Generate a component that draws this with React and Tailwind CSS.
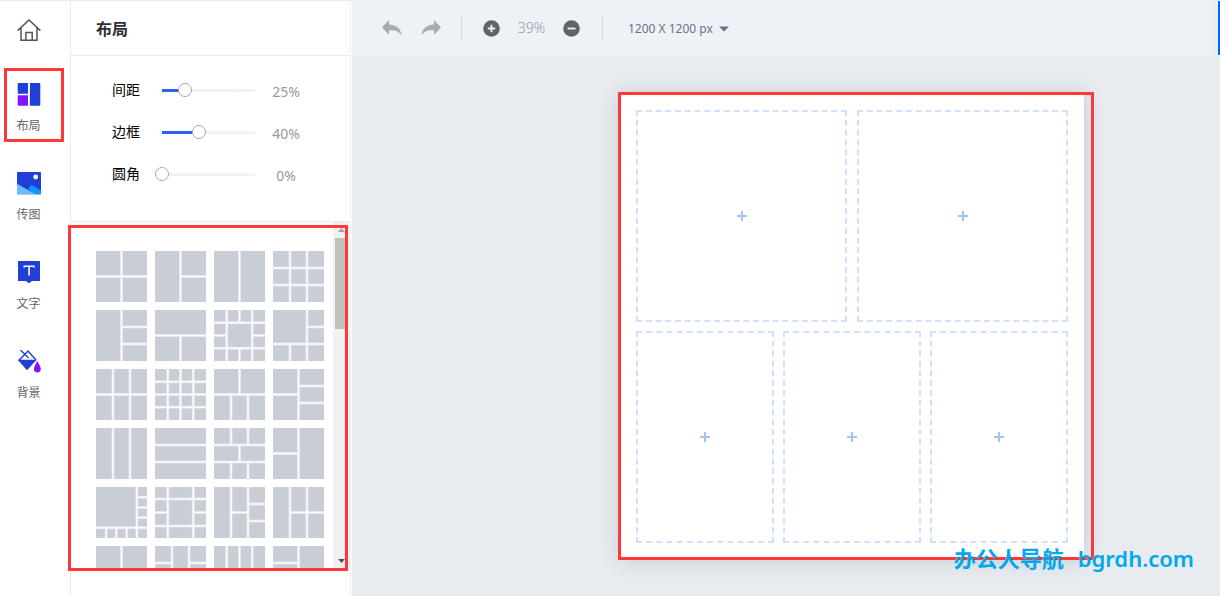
import { useState } from "react";

const templates = [
  "M30 0V60M0 30H60",
  "M30 0V60M30 30H60",
  "M30 0V60",
  "M20 0V60M40 0V60M0 20H60M0 40H60",
  "M30 0V60M30 20H60M30 40H60",
  "M0 30H60M30 30V60",
  "M15 0V60M45 0V60M0 15H60M0 45H60M30 0V15M30 45V60M0 30H15M45 30H60",
  "M40 0V60M0 40H60M40 20H60M20 40V60",
  "M20 0V60M40 0V60M0 30H60",
  "M15 0V60M30 0V60M45 0V60M0 15H60M0 30H60M0 45H60",
  "M0 30H60M30 0V30M20 30V60M40 30V60",
  "M30 0V60M0 30H30M30 20H60M30 40H60",
  "M20 0V60M40 0V60",
  "M0 20H60M0 40H60",
  "M0 20H60M0 40H60M20 0V20M40 0V20M30 20V40M20 40V60M40 40V60",
  "M30 0V60M0 30H30",
  "M48 0V60M0 48H60M48 12H60M48 24H60M48 36H60M12 48V60M24 48V60M36 48V60",
  "M15 0V60M45 0V60M0 14H60M0 46H60M0 30H15M45 30H60",
  "M20 0V60M40 0V60M20 30H40M40 20H60M40 40H60",
  "M20 0V60M40 0V60M20 30H60",
  "M30 0V60M0 40H60",
  "M20 0V60M40 0V60M0 20H20M40 20H60",
  "M15 0V60M30 0V60M45 0V60",
  "M30 0V60M0 20H30",
];

function HomeIcon() {
  return (
    <svg width="24" height="24" viewBox="0 0 24 24" fill="none" stroke="#555" strokeWidth="1.5">
      <path d="M0.6 12.6 12 2l11.4 10.6M4 9.6V22.2H20V9.6M8.9 22V14.4h6.3V22" />
    </svg>
  );
}

function LayoutIcon() {
  return (
    <svg width="24" height="24" viewBox="0 0 24 24">
      <path fill="#213fd6" d="M1.5 0H11v10.700H0.700V0.800ZM12.900 0H22.500L23.300 0.800V22L22.500 22.800H12.900Z" />
      <path fill="#8116fc" d="M0.700 12.300H11V22.800H1.500L0.700 22Z" />
    </svg>
  );
}

function PictureIcon() {
  return (
    <svg width="24" height="24" viewBox="0 0 24 24">
      <rect width="24" height="22.300" fill="#213fd6" rx="0.800" />
      <path fill="#0c99ff" d="M11 16.800 14.500 12.800 24 18.500v3.800H17Z" />
      <path fill="#6dbcff" d="M0 11.800 18.500 22.300H0Z" />
      <circle cx="18.700" cy="5" r="2.400" fill="#fff" />
    </svg>
  );
}

function TextIcon() {
  return (
    <svg width="24" height="24" viewBox="0 0 24 24">
      <path fill="#213fd6" d="M1.500 0H22.500L23 0.500V20H15L12 22.300 9 20H1V0.500Z" />
      <path stroke="#fff" strokeWidth="1.600" fill="none" d="M7.300 6.500V5.200H16.900V6.500M12.100 5.200V14.500" />
    </svg>
  );
}

function BucketIcon() {
  return (
    <svg width="24" height="24" viewBox="0 0 24 24">
      <path fill="none" stroke="#213fd6" strokeWidth="1.400" d="M3.500 0 11.500 8M1.500 10.700 11 1.100 19 10" />
      <path fill="#213fd6" d="M0.700 9.800H19.700L10 20.300Z" />
      <path fill="#8116fc" d="M20.300 11C21.500 13.500 23.800 16.500 23.800 19a3.400 3.400 0 0 1-6.900 0C16.900 16.500 19.200 13.500 20.300 11Z" />
    </svg>
  );
}

const tools = [
  { name: "布局", Icon: LayoutIcon },
  { name: "传图", Icon: PictureIcon },
  { name: "文字", Icon: TextIcon },
  { name: "背景", Icon: BucketIcon },
];

function Highlight({ className }) {
  return <span aria-hidden="true" className={"pointer-events-none absolute border-3 border-[#fc3838] " + className} />;
}

function Sidebar() {
  return (
    <aside className="flex w-[71px] shrink-0 flex-col border-r border-[#ebebeb]">
      <a href="#home" aria-label="首页" className="flex h-[67px] items-start pt-[17px] pl-[17px]">
        <HomeIcon />
      </a>
      <nav className="flex flex-col gap-[15px] pl-1">
        {tools.map(({ name, Icon }, i) => (
          <button key={name} type="button" className="relative flex h-[74px] w-[60px] flex-col items-center gap-[9px] pt-[15px] pr-[11px]">
            <Icon />
            <span className="text-xs leading-5 text-[#666]">{name}</span>
            {i === 0 && <Highlight className="inset-0" />}
          </button>
        ))}
      </nav>
    </aside>
  );
}

function SliderRow({ id, label, initial }) {
  const [value, setValue] = useState(initial);
  return (
    <div className="flex h-[42px] items-center">
      <label htmlFor={id} className="w-[43px] text-sm leading-5 text-black">{label}</label>
      <input
        id={id}
        type="range"
        min="0"
        max="100"
        value={value}
        onChange={(e) => setValue(Number(e.target.value))}
        style={{ backgroundImage: `linear-gradient(to right, #2b5ffa ${value}%, #f0f3f6 ${value}%)` }}
        className="h-[14px] w-[107px] appearance-none bg-transparent bg-[length:calc(100%-14px)_3px] bg-center bg-no-repeat [&::-webkit-slider-thumb]:size-[14px] [&::-webkit-slider-thumb]:appearance-none [&::-webkit-slider-thumb]:rounded-full [&::-webkit-slider-thumb]:border [&::-webkit-slider-thumb]:border-[#a3a9b5] [&::-webkit-slider-thumb]:bg-white"
      />
      <output htmlFor={id} className="w-12 pt-1 text-center text-sm leading-5 text-[#999]">{value}%</output>
    </div>
  );
}

function Panel() {
  return (
    <section className="flex w-[280px] shrink-0 flex-col border-r border-[#f0f0f0] pb-[26px]">
      <h1 className="flex h-[55px] shrink-0 items-center border-b border-[#ebebeb] pt-[2px] pl-[25px] text-base leading-6 font-bold text-[#2b2f36]">布局</h1>
      <div className="h-[166px] shrink-0 border-b border-[#ebebeb] pt-[13px] pl-[41px]">
        <SliderRow id="gap" label="间距" initial={25} />
        <SliderRow id="frame" label="边框" initial={40} />
        <SliderRow id="radius" label="圆角" initial={0} />
      </div>
      <div className="relative flex min-h-0 flex-1">
        <div className="min-w-0 flex-1 overflow-hidden pt-[29px] pl-[25px]">
          <div className="grid grid-cols-[repeat(4,51px)] gap-2">
            {templates.map((d, i) => (
              <button key={i} type="button" aria-label={`模板 ${i + 1}`} className="size-[51px] bg-[#c9cdd6]">
                <svg className="size-full" viewBox="0 0 60 60" fill="none" stroke="#fff">
                  <path d={d} strokeWidth="3.500" strokeOpacity="0.450" />
                  <path d={d} strokeWidth="1.800" strokeOpacity="0.850" />
                </svg>
              </button>
            ))}
          </div>
        </div>
        <div aria-hidden="true" className="flex w-[17px] shrink-0 flex-col items-center justify-between bg-[#f1f1f1]">
          <div className="flex w-full flex-col items-center">
            <svg className="h-4 w-[17px]" viewBox="0 0 17 16"><path fill="#a3a3a3" d="M5 10 8.500 6 12 10Z" /></svg>
            <span className="h-[91px] w-[13px] bg-[#c1c1c1]" />
          </div>
          <svg className="h-[17px] w-[17px]" viewBox="0 0 17 17"><path fill="#505050" d="M5 6H12L8.500 10Z" /></svg>
        </div>
        <Highlight className="top-[3px] right-[2px] -bottom-px -left-[3px]" />
      </div>
    </section>
  );
}

function Toolbar() {
  return (
    <header className="flex h-[55px] shrink-0 border-b border-[#edf0f3] bg-[#eef2f7]">
      <div className="flex flex-1 items-center pl-[30px]">
        <button type="button" aria-label="撤销">
          <svg width="20" height="16" viewBox="0 0 20 16"><path fill="#aaabad" d="M0 7.300 7 0V4.500C14 5 19 8 19.500 15.500 16.500 11 13 10 7 10.300V15Z" /></svg>
        </button>
        <button type="button" aria-label="重做" className="ml-[19px]">
          <svg width="20" height="16" viewBox="0 0 20 16"><path fill="#aaabad" d="M20 7.300 13 0V4.500C6 5 1 8 0.500 15.500 3.500 11 7 10 13 10.300V15Z" /></svg>
        </button>
        <span className="ml-5 h-5 w-px bg-[#d3d6dc]" />
        <button type="button" aria-label="放大" className="ml-[21px]">
          <svg width="17" height="17" viewBox="0 0 17 17"><circle cx="8.500" cy="8.500" r="8.300" fill="#626365" /><path stroke="#eef2f7" strokeWidth="1.900" d="M4.800 8.500h7.400M8.500 4.800v7.400" /></svg>
        </button>
        <span className="w-[63px] text-center text-sm leading-5 font-light text-[#8f97a6]">39%</span>
        <button type="button" aria-label="缩小">
          <svg width="17" height="17" viewBox="0 0 17 17"><circle cx="8.500" cy="8.500" r="8.300" fill="#626365" /><path stroke="#eef2f7" strokeWidth="1.900" d="M4.500 8.500h8" /></svg>
        </button>
        <span className="ml-[22px] h-5 w-px bg-[#d3d6dc]" />
        <button type="button" className="ml-[25px] flex items-center gap-[6px] pt-[2px] text-xs leading-5 text-[#65758a]">
          1200 X 1200 px
          <svg width="10" height="6" viewBox="0 0 10 6"><path fill="#65758a" d="M0 0.500H10L5 5.500Z" /></svg>
        </button>
      </div>
      <button type="button" aria-label="下载" className="w-[2px] bg-[#0566ff] shadow-[0_0_12px_rgba(40,80,140,0.150)]" />
    </header>
  );
}

function Cell({ label }) {
  return (
    <button type="button" aria-label={label} className="flex flex-1 items-center justify-center border-2 border-dashed border-[#d2e0ff]">
      <svg width="10" height="10" viewBox="0 0 10 10" stroke="#a4c3fd" strokeWidth="2"><path d="M0 5H10M5 0V10" /></svg>
    </button>
  );
}

function Stage() {
  return (
    <main className="relative flex min-h-0 flex-1 items-center justify-center bg-[#e8ebf0] pl-[132px]">
      <div className="relative flex h-[465px] w-[464px] flex-col gap-[9px] bg-white p-4 shadow-[0_0_20px_rgba(60,70,90,0.220)]">
        <div className="flex flex-1 gap-[10px]">
          <Cell label="添加图片 1" />
          <Cell label="添加图片 2" />
        </div>
        <div className="flex flex-1 gap-[9px]">
          <Cell label="添加图片 3" />
          <Cell label="添加图片 4" />
          <Cell label="添加图片 5" />
        </div>
        <Highlight className="-top-[2px] -right-[10px] -bottom-px -left-[2px]" />
      </div>
      <p className="pointer-events-none absolute right-[26px] bottom-[22px] flex items-baseline gap-[14px] text-[22px] leading-8 font-bold whitespace-nowrap text-[#00a8ec]">
        <span>办公人导航</span>
        <span className="font-semibold">bgrdh.com</span>
      </p>
    </main>
  );
}

export default function App() {
  return (
    <div lang="zh-CN" className="flex h-screen overflow-hidden border-t border-[#ebebeb] bg-white font-['Noto_Sans','Noto_Sans_CJK_SC',sans-serif]">
      <Sidebar />
      <Panel />
      <div className="ml-px flex min-w-0 flex-1 flex-col">
        <Toolbar />
        <Stage />
      </div>
    </div>
  );
}
